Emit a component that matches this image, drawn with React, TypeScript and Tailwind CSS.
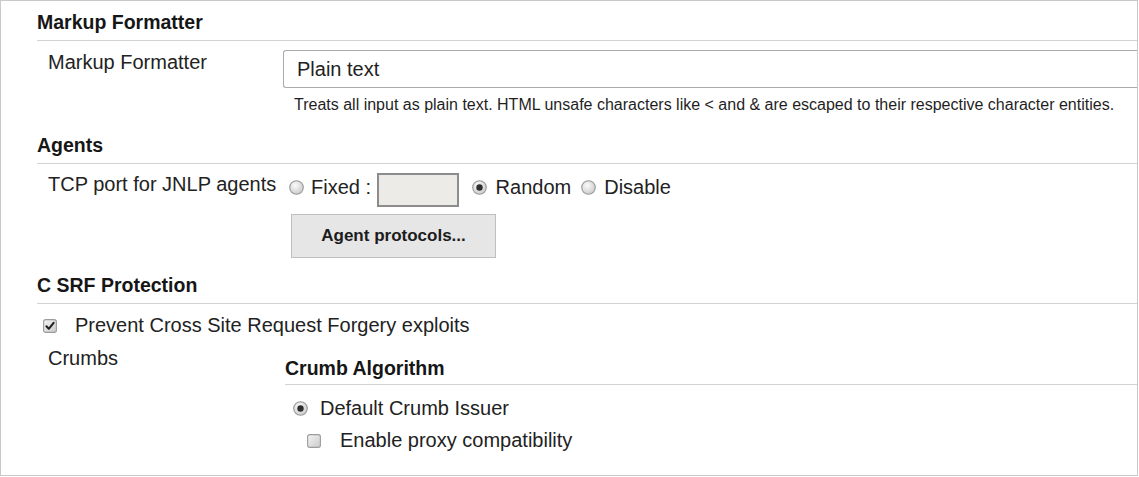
import { useId } from 'react';

function Radio({ checked = false }: { checked?: boolean }) {
  const id = useId();
  return (
    <svg width="15" height="15" viewBox="0 0 15 15" className="shrink-0">
      <defs>
        <radialGradient id={id} cx="40%" cy="35%" r="70%">
          <stop offset="0%" stopColor="#fbfbfb" />
          <stop offset="100%" stopColor="#c9c9c9" />
        </radialGradient>
      </defs>
      <circle cx="7.5" cy="7.5" r="6.8" fill={`url(#${id})`} stroke="#9a9a9a" strokeWidth="1.1" />
      {checked && <circle cx="7.5" cy="7.5" r="3.2" fill="#2e2e2e" />}
    </svg>
  );
}

function Checkbox({ checked = false }: { checked?: boolean }) {
  const id = useId();
  return (
    <svg width="14" height="14" viewBox="0 0 14 14" className="shrink-0">
      <defs>
        <linearGradient id={id} x1="0" y1="0" x2="1" y2="1">
          <stop offset="0%" stopColor="#f4f4f4" />
          <stop offset="100%" stopColor="#cacaca" />
        </linearGradient>
      </defs>
      <rect x="0.6" y="0.6" width="12.8" height="12.8" rx="2.2" fill={`url(#${id})`} stroke="#9c9c9c" strokeWidth="1.1" />
      {checked && (
        <path d="M3.4 7.2 L5.8 9.8 L10.6 3.8" fill="none" stroke="#1e1e1e" strokeWidth="2" strokeLinecap="round" strokeLinejoin="round" />
      )}
    </svg>
  );
}

// Section title with the grey rule underneath
function SectionHeader({ title, className = '' }: { title: string; className?: string }) {
  return (
    <div className={`border-b border-[#d2d2d2] pb-[6px] text-[19.5px] font-bold leading-[23px] text-[#161616] ${className}`}>
      {title}
    </div>
  );
}

export default function App() {
  return (
    <div
      className="h-[477px] w-[1139px] bg-white"
      style={{ fontFamily: '"Liberation Sans", Arial, sans-serif' }}
    >
      <div className="h-[476px] w-[1138px] border border-[#c9c9c9] pl-[36px] text-[20px] leading-[23px] text-[#222]">
        {/* Markup Formatter */}
        <SectionHeader title="Markup Formatter" className="mt-[10px]" />
        <div className="flex items-start pt-[9px]">
          <div className="mt-px w-[246px] shrink-0 pl-[11px]">Markup Formatter</div>
          <div className="flex-1">
            <div className="h-[38px] rounded-l-[3px] border border-r-0 border-[#ababab] bg-white px-[13px] py-[6.5px]">
              Plain text
            </div>
            <div className="mt-[8px] pl-[11px] text-[16px] leading-[18px] text-[#1f1f1f]">
              Treats all input as plain text. HTML unsafe characters like &lt; and &amp; are escaped to their respective character entities.
            </div>
          </div>
        </div>

        {/* Agents */}
        <SectionHeader title="Agents" className="mt-[20px]" />
        <div className="flex items-start pt-[9px]">
          <div className="w-[246px] shrink-0 pl-[11px]">TCP port for JNLP agents</div>
          <div className="flex flex-col items-start">
            <div className="flex items-start">
              <div className="ml-[6px] mt-[3px] flex items-center">
                <Radio />
                <span className="ml-[7px] whitespace-pre">Fixed : </span>
              </div>
              <div className="h-[34px] w-[82px] border-2 border-[#8c8c8c] bg-[#ecebe8]" />
              <div className="ml-[13px] mt-[3px] flex items-center">
                <Radio checked />
                <span className="ml-[9px]">Random</span>
              </div>
              <div className="ml-[10px] mt-[3px] flex items-center">
                <Radio />
                <span className="ml-[8px]">Disable</span>
              </div>
            </div>
            <button
              type="button"
              className="ml-[8px] mt-[7px] h-[44px] w-[205px] border border-[#bfbfbf] bg-[#e6e6e6] text-[17px] font-bold leading-[20px] text-[#1c1c1c]"
            >
              Agent protocols...
            </button>
          </div>
        </div>

        {/* CSRF */}
        <SectionHeader title="C SRF Protection" className="mt-[16px]" />
        <div className="flex items-center pt-[10px]">
          <div className="ml-[6px]">
            <Checkbox checked />
          </div>
          <span className="ml-[18px]">Prevent Cross Site Request Forgery exploits</span>
        </div>
        <div className="mt-[10px] flex items-start">
          <div className="w-[248px] shrink-0 pl-[11px]">Crumbs</div>
          <div className="flex-1 pt-[10px]">
            <div className="border-b border-[#d2d2d2] pb-[4px] text-[19.5px] font-bold text-[#161616]">Crumb Algorithm</div>
            <div className="mt-[12px] flex items-center pl-[8px]">
              <Radio checked />
              <span className="ml-[12px]">Default Crumb Issuer</span>
            </div>
            <div className="mt-[9px] flex items-center pl-[22px]">
              <Checkbox />
              <span className="ml-[19px]">Enable proxy compatibility</span>
            </div>
          </div>
        </div>
      </div>
    </div>
  );
}
